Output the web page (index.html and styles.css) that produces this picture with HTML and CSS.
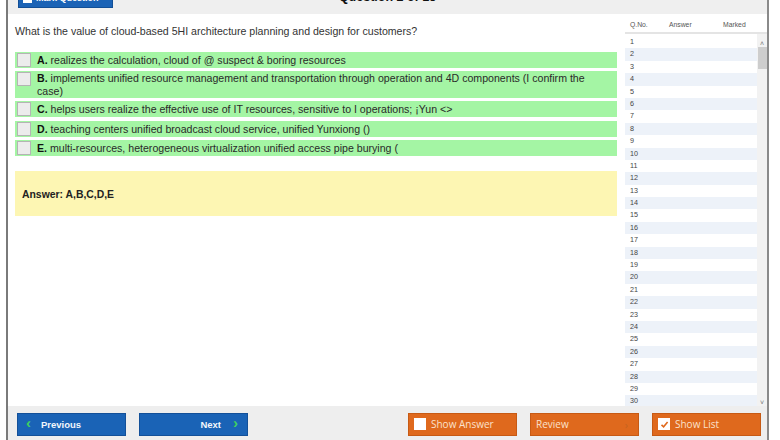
FILE: index.html
```html
<!DOCTYPE html>
<html>
<head>
<meta charset="utf-8">
<link rel="stylesheet" href="styles.css">
</head>
<body>
<div class="window">
  <div class="topbar">
    <div class="topinner">
      <div class="mark-btn"><span class="mark-box"></span>Mark Question</div>
      <div class="title">Question 2 of 15</div>
    </div>
  </div>
  <div class="main">
    <div class="content">
      <p class="question">What is the value of cloud-based 5HI architecture planning and design for customers?</p>
      <div class="options">
        <div class="opt"><span class="cb"></span><span class="otext"><b>A.</b> realizes the calculation, cloud of @ suspect &amp; boring resources</span></div>
        <div class="opt two"><span class="cb"></span><span class="otext"><b>B.</b> implements unified resource management and transportation through operation and 4D components (I confirm the case)</span></div>
        <div class="opt"><span class="cb"></span><span class="otext"><b>C.</b> helps users realize the effective use of IT resources, sensitive to I operations; ¡Yun &lt;&gt;</span></div>
        <div class="opt"><span class="cb"></span><span class="otext"><b>D.</b> teaching centers unified broadcast cloud service, unified Yunxiong ()</span></div>
        <div class="opt"><span class="cb"></span><span class="otext"><b>E.</b> multi-resources, heterogeneous virtualization unified access pipe burying (</span></div>
      </div>
      <div class="answer">Answer: A,B,C,D,E</div>
    </div>
    <div class="side">
      <div class="side-head"><span class="h-no">Q.No.</span><span class="h-ans">Answer</span><span class="h-mk">Marked</span></div>
      <div class="side-body">
        <div class="rows" id="rows"></div>
        <div class="scroll">
          <div class="sarrow">&#708;</div>
          <div class="thumb"></div>
          <div class="strack"></div>
          <div class="sarrow">&#709;</div>
        </div>
      </div>
    </div>
  </div>
  <div class="bottombar">
    <div class="btn blue"><span class="chev">&#8249;</span>Previous</div>
    <div class="btn blue next">Next<span class="chev">&#8250;</span></div>
    <div class="spacer"></div>
    <div class="btn orange"><span class="obox"></span>Show Answer</div>
    <div class="btn orange review">Review<span class="rv">&#8250;</span></div>
    <div class="btn orange"><span class="obox checked"><svg width="9" height="9" viewBox="0 0 9 9"><path d="M1.5 4.8 L3.6 6.8 L7.6 2" fill="none" stroke="#e0691d" stroke-width="1.6"/></svg></span>Show List</div>
  </div>
</div>
<script>
var r = document.getElementById('rows');
for (var i = 1; i <= 30; i++) {
  var d = document.createElement('div');
  d.className = 'row' + (i % 2 === 0 ? ' alt' : '');
  d.textContent = i;
  r.appendChild(d);
}
</script>
</body>
</html>
```
FILE: styles.css
```css
* { box-sizing: border-box; }
html, body { margin: 0; padding: 0; background: #fff; }
body { font-family: "Liberation Sans", Arial, sans-serif; color: #222; }

.window {
  margin-left: 6px;
  width: 763px;
  height: 440px;
  border-left: 2px solid #7a7a7a;
  border-right: 2px solid #8a8a8a;
  display: flex;
  flex-direction: column;
  overflow: hidden;
}

.topbar {
  height: 14px;
  background: #efefef;
  overflow: hidden;
  flex: none;
}
.topinner {
  position: relative;
  margin-top: -12px;
  height: 20px;
  display: flex;
  align-items: center;
}
.mark-btn {
  margin-left: 10px;
  width: 95px;
  height: 19px;
  background: #1b63b6;
  border: 1px solid #124f96;
  color: #fff;
  font-size: 9px;
  font-weight: bold;
  display: flex;
  align-items: center;
  padding-left: 4px;
  gap: 4px;
}
.mark-box { width: 9px; height: 9px; background: #fff; }
.title {
  position: absolute;
  left: 0; right: 0;
  text-align: center;
  font-weight: bold;
  font-size: 12.5px;
  color: #111;
  top: 2px;
}

.main {
  flex: 1;
  display: flex;
  min-height: 0;
  background: #fff;
}
.content {
  width: 616px;
  padding-left: 7px;
}
.question {
  margin: 11px 0 0 0;
  font-size: 10.6px;
  color: #333;
  line-height: 12px;
}
.options {
  margin-top: 15px;
  width: 602px;
  display: flex;
  flex-direction: column;
  gap: 3px;
}
.opt {
  background: #a4f5a4;
  display: flex;
  align-items: flex-start;
  min-height: 16px;
  padding: 1px 0 1px 2px;
}
.cb {
  flex: none;
  width: 14px;
  height: 14px;
  background: #ececec;
  border: 1px solid #b4b4b4;
  margin-right: 6px;
}
.otext {
  font-size: 10.6px;
  line-height: 12px;
  padding-top: 1px;
  color: #2a2a2a;
  padding-right: 26px;
}
.opt.two { min-height: 27px; }
.opt.two .otext { line-height: 12.6px; padding-top: 0; }
.opt:nth-child(3) { margin-bottom: 1px; }
.otext b { color: #111; }

.answer {
  margin-top: 15px;
  width: 602px;
  height: 45px;
  background: #fdf6b3;
  font-size: 10.4px;
  font-weight: bold;
  color: #222;
  padding: 18px 0 0 7px;
}

.side {
  flex: 1;
  margin-left: 1px;
  display: flex;
  flex-direction: column;
}
.side-head {
  height: 20px;
  border-bottom: 2px solid #e4e4e4;
  font-size: 6.8px;
  color: #555;
  display: flex;
  align-items: center;
  padding-top: 2px;
}
.h-no { margin-left: 5px; width: 39px; }
.h-ans { width: 54px; }
.side-body { flex: 1; display: flex; min-height: 0; }
.rows { flex: 1; padding-top: 2px; }
.row {
  height: 12.4px;
  font-size: 7.2px;
  line-height: 12.4px;
  padding-left: 5px;
  color: #444;
  background: #fff;
}
.row.alt { background: #edf2f9; }
.scroll {
  width: 10px;
  background: #f2f2f2;
  display: flex;
  flex-direction: column;
  align-items: center;
}
.sarrow { font-size: 7px; color: #777; height: 13px; line-height: 13px; padding-top: 3px; }
.thumb { width: 9px; height: 22px; background: #cdcdcd; }
.strack { flex: 1; }

.bottombar {
  height: 34px;
  flex: none;
  background: #eeeeee;
  display: flex;
  align-items: center;
  padding: 2px 6px 0 9px;
  gap: 13px;
}
.spacer { flex: 1; }
.btn {
  width: 109px;
  height: 23px;
  display: flex;
  align-items: center;
  font-size: 9.5px;
}
.blue {
  background: #1a63b6;
  border: 1px solid #135099;
  color: #f2f6fb;
  font-weight: bold;
  padding-left: 8px;
}
.blue .chev { color: #3fd060; font-size: 15px; font-weight: bold; margin-right: 10px; line-height: 14px; margin-top: -2px; }
.blue.next { justify-content: flex-end; padding-right: 9px; }
.blue.next .chev { margin: -2px 0 0 12px; }
.orange {
  background: #df691d;
  border: 1px solid #c75a14;
  color: #fbe1cc;
  font-family: "Open Sans", "Noto Sans", sans-serif;
  font-size: 10px;
  padding-left: 5px;
}
.obox {
  width: 12px;
  height: 12px;
  background: #fff;
  margin-right: 5px;
  display: flex;
  align-items: center;
  justify-content: center;
}
.review { justify-content: space-between; padding-right: 10px; }
.rv { color: #c5631f; font-size: 11px; }
```
